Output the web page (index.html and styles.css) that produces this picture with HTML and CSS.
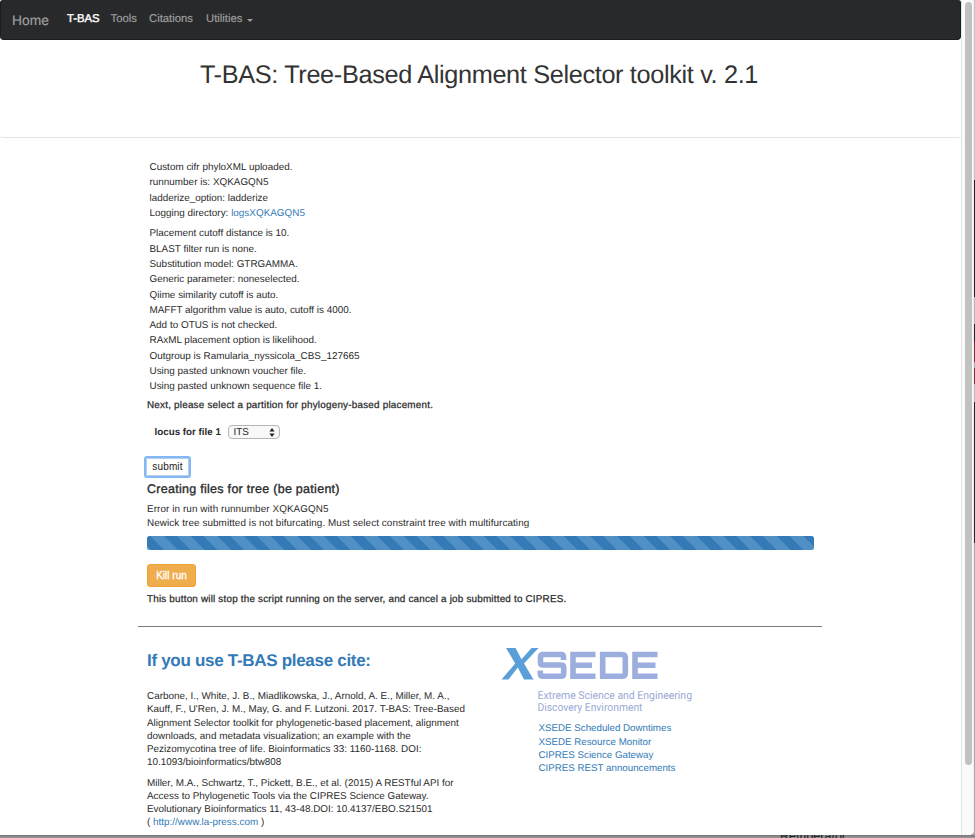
FILE: index.html
```html
<!DOCTYPE html>
<html lang="en">
<head>
<meta charset="utf-8">
<title>T-BAS</title>
<link rel="stylesheet" href="styles.css">
</head>
<body>
<div class="window">
  <main class="page">
    <nav class="navbar">
      <a class="brand">Home</a>
      <a class="nav-link active">T-BAS</a>
      <a class="nav-link tools">Tools</a>
      <a class="nav-link citations">Citations</a>
      <a class="nav-link utilities">Utilities</a><i class="caret"></i>
    </nav>
    <header class="header"><h1>T-BAS: Tree-Based Alignment Selector toolkit v. 2.1</h1></header>
    <div class="container">
      <ul class="log">
        <li>Custom cifr phyloXML uploaded.</li>
        <li>runnumber is: XQKAGQN5</li>
        <li>ladderize_option: ladderize</li>
        <li>Logging directory: <a>logsXQKAGQN5</a></li>
      </ul>
      <ul class="log">
        <li>Placement cutoff distance is 10.</li>
        <li>BLAST filter run is none.</li>
        <li>Substitution model: GTRGAMMA.</li>
        <li>Generic parameter: noneselected.</li>
        <li>Qiime similarity cutoff is auto.</li>
        <li>MAFFT algorithm value is auto, cutoff is 4000.</li>
        <li>Add to OTUS is not checked.</li>
        <li>RAxML placement option is likelihood.</li>
        <li>Outgroup is Ramularia_nyssicola_CBS_127665</li>
        <li>Using pasted unknown voucher file.</li>
        <li>Using pasted unknown sequence file 1.</li>
      </ul>
      <p class="next medium">Next, please select a partition for phylogeny-based placement.</p>
      <div class="locus">
        <label>locus for file 1</label>
        <div class="select"><span>ITS</span>
          <svg width="6" height="9" viewBox="0 0 6 9"><path d="M3 0L5.6 3.5H.4zM3 9L.4 5.5h5.2z" fill="#222"/></svg>
        </div>
      </div>
      <button class="submit"><span>submit</span></button>
      <h4>Creating files for tree (be patient)</h4>
      <p class="error">Error in run with runnumber XQKAGQN5<br>Newick tree submitted is not bifurcating. Must select constraint tree with multifurcating</p>
      <div class="progress"></div>
      <button class="kill">Kill run</button>
      <p class="medium note">This button will stop the script running on the server, and cancel a job submitted to CIPRES.</p>
      <hr>
      <div class="columns">
        <section class="cite">
          <h3>If you use T-BAS please cite:</h3>
          <p>Carbone, I., White, J. B., Miadlikowska, J., Arnold, A. E., Miller, M. A.,<br>Kauff, F., U'Ren, J. M., May, G. and F. Lutzoni. 2017. T-BAS: Tree-Based<br>Alignment Selector toolkit for phylogenetic-based placement, alignment<br>downloads, and metadata visualization; an example with the<br>Pezizomycotina tree of life. Bioinformatics 33: 1160-1168. DOI:<br>10.1093/bioinformatics/btw808</p>
          <p>Miller, M.A., Schwartz, T., Pickett, B.E., et al. (2015) A RESTful API for<br>Access to Phylogenetic Tools via the CIPRES Science Gateway.<br>Evolutionary Bioinformatics 11, 43-48.DOI: 10.4137/EBO.S21501<br>( <a>http://www.la-press.com</a> )</p>
        </section>
        <section class="xsede">
          <svg class="logo" width="200" height="70" viewBox="1 0 200 70" role="img" aria-label="XSEDE">
            <path d="M5 1h9.500L20.500 12.200 30.500 1h7L23 16.500 32.500 32.500H23L16.800 20.500 7.500 32.500H.5L14.200 16.500z" fill="#5b9fd8"/>
            <g fill="none" stroke="#9caedd" stroke-width="5.600">
              <path d="M62.500 13V10Q62.500 7.500 60 7.500H42Q39.500 7.500 39.500 10V15.500Q39.500 18 42 18H60Q62.700 18 62.700 20.500V26.500Q62.700 29.200 60 29.200H42Q39.300 29.200 39.300 26.700V23.500"/>
              <path d="M94.500 7.500H72V29.200H94.500M72 18.300H91"/>
              <path d="M101.700 7.500H121Q124.300 7.500 124.300 10.800V26Q124.300 29.200 121 29.200H101.700z"/>
              <path d="M156.500 7.500H134V29.200H156.500M134 18.300H154.500"/>
            </g>
            <g class="tagline" fill="#9aaad6">
              <text x="36.500" y="51.800" textLength="154.500" lengthAdjust="spacingAndGlyphs">Extreme Science and Engineering</text>
              <text x="36.500" y="64" textLength="105" lengthAdjust="spacingAndGlyphs">Discovery Environment</text>
            </g>
          </svg>
          <ul class="links">
            <li><a>XSEDE Scheduled Downtimes</a></li>
            <li><a>XSEDE Resource Monitor</a></li>
            <li><a>CIPRES Science Gateway</a></li>
            <li><a>CIPRES REST announcements</a></li>
          </ul>
        </section>
      </div>
    </div>
  </main>
  <aside class="scrollbar"><div class="thumb"></div></aside>
</div>
<div class="behind"><span>Refrigerator</span></div>
</body>
</html>
```
FILE: styles.css
```css
* { box-sizing: border-box; }
body {
  margin: 0; width: 975px; height: 838px; overflow: hidden;
  background: linear-gradient(#c4c4c4 0 180px, #22242f 180px 297px, #b7b7b7 297px 324px, #22242f 324px 342px, #862f3e 342px 362px, #aaa 362px 368px, #862f3e 368px 384px, #bbb 384px 402px, #20283a 402px 543px, #aaa 543px);
  font: 9.9px/13.25px "Liberation Sans", Arial, sans-serif;
  color: #2b2b2b; text-rendering: geometricPrecision;
}
h1, h3, h4, p, ul { margin: 0; padding: 0; font-weight: normal; }
ul { list-style: none; }
a { color: #337ab7; text-decoration: none; }
.window { display: flex; width: 974px; height: 835px; background: #fff; border-radius: 0 0 5px 0; overflow: hidden; }
.page { width: 961px; flex: none; }
.navbar {
  height: 40px; display: flex; align-items: center; padding: 2px 0 0 12px;
  background: #28292b; border: 1px solid #1c1c1d; border-width: 0 1px 1px; border-radius: 3px 3px 4px 4px;
}
.navbar a { color: #9d9d9d; }
.brand { font-size: 13.8px; width: 55px; margin-left: -1px; -webkit-text-stroke: .2px #9d9d9d; }
.nav-link { font-size: 11.300px; margin-top: -1px; -webkit-text-stroke: .2px #9d9d9d; }
.navbar .active { color: #fff; width: 43.500px; -webkit-text-stroke: .4px #fff; }
.tools { width: 38.500px; }
.citations { width: 57px; }
.utilities { width: 41px; }
.caret { border: 3px solid transparent; border-top-color: #9d9d9d; border-bottom: 0; }
.header { height: 97.500px; border-bottom: 1px solid #e2e2e2; border-radius: 0 0 3px 3px; padding-top: 19px; text-align: center; }
h1 { font-size: 25.300px; line-height: 32px; letter-spacing: -.35px; color: #333; margin-left: -3px; }
.container { margin: 22.500px 0 0 138px; width: 684px; padding: 0 9px; }
.log { padding-left: 2.500px; margin-bottom: 5px; line-height: 15.320px; letter-spacing: .02px; }
.medium { -webkit-text-stroke: .25px #2b2b2b; letter-spacing: .215px; }
.next { margin-top: -.5px; }
.locus { display: flex; align-items: center; height: 16px; margin: 12px 0 0 7.500px; }
.locus label { font-weight: bold; font-size: 9.800px; width: 73px; }
.select {
  width: 52px; height: 14px; border: 1px solid #b5b5b5; border-radius: 4px; background: #f8f8f8;
  display: flex; align-items: center; justify-content: space-between; padding: 0 4px 0 5px; color: #222;
}
.submit {
  display: block; width: 47px; height: 22px; margin: 16px 0 0 -3px; padding: 0;
  border: 2px solid #81b8f5; border-radius: 3px; background: #fff;
  box-shadow: inset 0 0 0 1px #b7cfe9; font: 10px/14px "Liberation Sans", Arial, sans-serif; letter-spacing: .15px; color: #222;
}
h4 { font-size: 12.500px; line-height: 16px; margin-top: 2.500px; letter-spacing: .28px; -webkit-text-stroke: .35px #2b2b2b; }
.error { margin-top: 6.500px; letter-spacing: .09px; }
.progress {
  width: 667px; height: 14px; margin-top: 6px; border-radius: 2.500px;
  background: linear-gradient(45deg, #5190c5 25%, #337ab7 25% 50%, #5190c5 50% 75%, #337ab7 75%) 3.700px 0 / 26.650px 26.650px;
}
.kill {
  display: block; width: 49px; height: 23px; margin-top: 14px; padding: 2px 0 0;
  background: #f0ad4e; border: 1px solid #eea236; border-radius: 3px;
  color: #fff; font: 10px/14px "Liberation Sans", Arial, sans-serif; -webkit-text-stroke: .3px #fff;
}
.note { margin-top: 6px; letter-spacing: .195px; }
hr { border: 0; height: 1.500px; background: #7b7b7b; margin: 19.500px -9px 0; }
.columns { display: flex; }
.cite { width: 354.500px; }
h3 { font-size: 17px; line-height: 20px; font-weight: bold; letter-spacing: -.3px; color: #337ab7; margin: 23.500px 0 19.500px; }
.cite p { margin-bottom: 7px; white-space: nowrap; letter-spacing: .015px; }
.xsede { padding-top: 20px; }
.logo { display: block; overflow: visible; }
.tagline { font: 11px Roboto, sans-serif; }
.links { padding: 5.300px 0 0 37px; font-size: 9.750px; }
.scrollbar { width: 13px; background: #fafafa; border-left: 1px solid #e4e4e4; border-right: 1px solid #eee; padding: 2px 0 0 2.500px; }
.thumb { width: 7px; height: 763px; border-radius: 4px; background: #c1c1c1; }
.behind { height: 3px; overflow: hidden; background: linear-gradient(#777, #999); padding-left: 780px; }
.behind span { display: block; margin-top: -5px; font-size: 12.500px; line-height: 13px; color: #222; }
```
